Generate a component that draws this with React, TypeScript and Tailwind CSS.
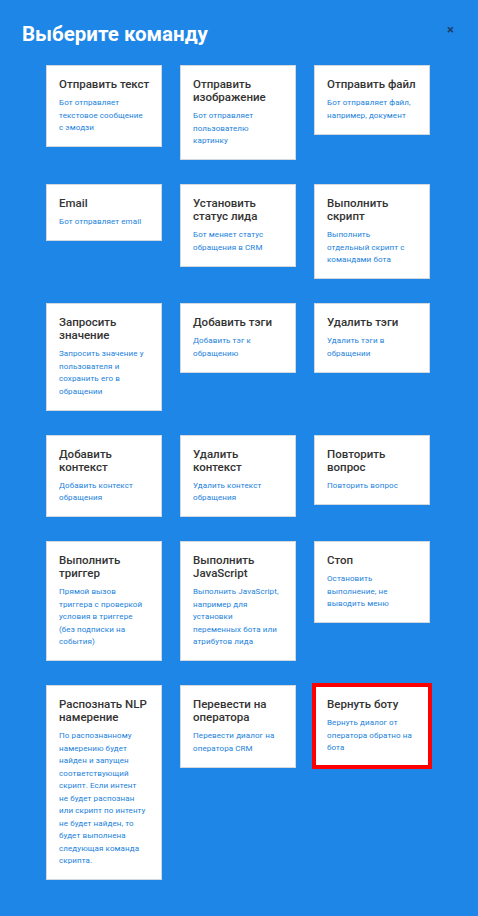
type Command = {
  title: string[];
  desc: string[];
  active?: boolean;
};

const commands: Command[] = [
  { title: ["Отправить текст"], desc: ["Бот отправляет", "текстовое сообщение", "с эмодзи"] },
  { title: ["Отправить", "изображение"], desc: ["Бот отправляет", "пользователю", "картинку"] },
  { title: ["Отправить файл"], desc: ["Бот отправляет файл,", "например, документ"] },
  { title: ["Email"], desc: ["Бот отправляет email"] },
  { title: ["Установить", "статус лида"], desc: ["Бот меняет статус", "обращения в CRM"] },
  { title: ["Выполнить", "скрипт"], desc: ["Выполнить", "отдельный скрипт с", "командами бота"] },
  {
    title: ["Запросить", "значение"],
    desc: ["Запросить значение у", "пользователя и", "сохранить его в", "обращении"],
  },
  { title: ["Добавить тэги"], desc: ["Добавить тэг к", "обращению"] },
  { title: ["Удалить тэги"], desc: ["Удалить тэги в", "обращении"] },
  { title: ["Добавить", "контекст"], desc: ["Добавить контекст", "обращения"] },
  { title: ["Удалить", "контекст"], desc: ["Удалить контекст", "обращения"] },
  { title: ["Повторить", "вопрос"], desc: ["Повторить вопрос"] },
  {
    title: ["Выполнить", "триггер"],
    desc: ["Прямой вызов", "триггера с проверкой", "условия в триггере", "(без подписки на", "события)"],
  },
  {
    title: ["Выполнить", "JavaScript"],
    desc: ["Выполнить JavaScript,", "например для", "установки", "переменных бота или", "атрибутов лида"],
  },
  { title: ["Стоп"], desc: ["Остановить", "выполнение, не", "выводить меню"] },
  {
    title: ["Распознать NLP", "намерение"],
    desc: [
      "По распознанному",
      "намерению будет",
      "найден и запущен",
      "соответствующий",
      "скрипт. Если интент",
      "не будет распознан",
      "или скрипт по интенту",
      "не будет найден, то",
      "будет выполнена",
      "следующая команда",
      "скрипта.",
    ],
  },
  { title: ["Перевести на", "оператора"], desc: ["Перевести диалог на", "оператора CRM"] },
  { title: ["Вернуть боту"], desc: ["Вернуть диалог от", "оператора обратно на", "бота"], active: true },
];

function CommandCard({ cmd }: { cmd: Command }) {
  return (
    <div
      className={
        "bg-white border border-[#d3d8de] px-3 pt-3 pb-[11.5px] cursor-pointer" +
        (cmd.active ? " outline-4 outline-[#ff0000] -outline-offset-2" : "")
      }
    >
      <div className="text-[11.5px] leading-[13px] text-[#333333] font-medium">
        {cmd.title.map((line) => (
          <div key={line} className="whitespace-nowrap">
            {line}
          </div>
        ))}
      </div>
      <div className="mt-[6px] text-[8px] leading-[12.5px] tracking-[0.1px] text-[#1a7fdc]">
        {cmd.desc.map((line) => (
          <div key={line} className="whitespace-nowrap">
            {line}
          </div>
        ))}
      </div>
    </div>
  );
}

export default function App() {
  return (
    <div className="min-h-[916px] w-full bg-[#1e86e6] font-['Roboto','Liberation_Sans',sans-serif] pb-9">
      {/* Header */}
      <div className="flex items-start justify-between pl-[22px] pr-[24px] pt-[22px]">
        <h1 className="text-[20.5px] leading-[25px] font-bold text-white">Выберите команду</h1>
        <span className="text-[13px] leading-[13px] font-bold text-[#1b3d66] mt-[1px]">×</span>
      </div>

      {/* Commands grid */}
      <div className="mt-[18px] pl-[46px] grid grid-cols-[116px_116px_116px] gap-x-[18px] gap-y-6 items-start">
        {commands.map((cmd) => (
          <CommandCard key={cmd.title.join(" ")} cmd={cmd} />
        ))}
      </div>
    </div>
  );
}
